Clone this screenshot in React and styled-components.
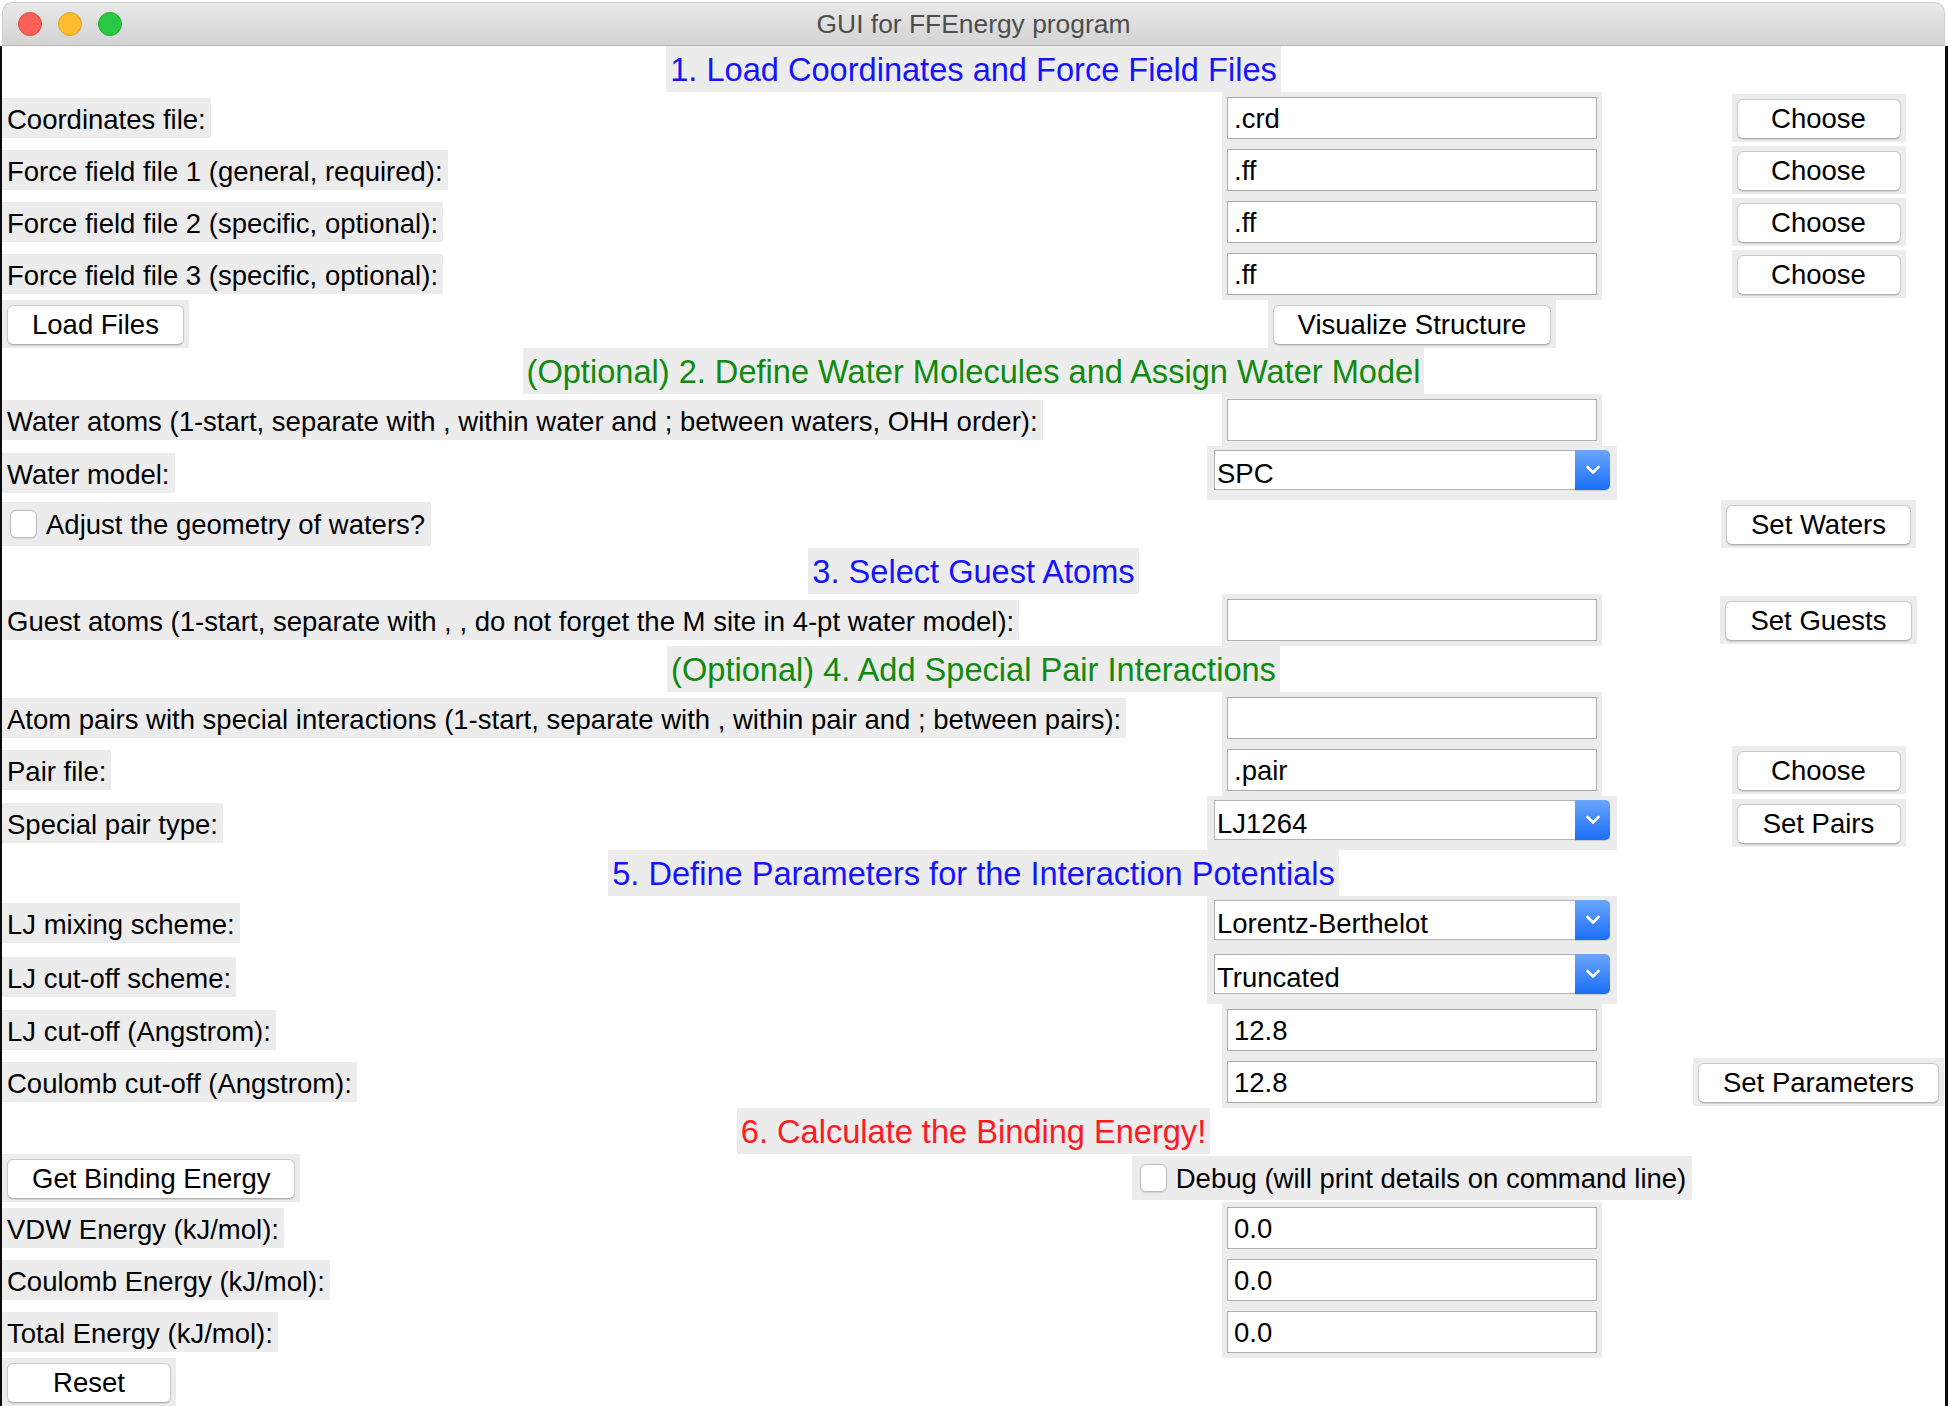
import React from 'react';
import styled, { createGlobalStyle } from 'styled-components';

const GlobalStyle = createGlobalStyle`
    * { box-sizing: border-box; }
    html, body {
        margin: 0;
        padding: 0;
        background: #fff;
        overflow: hidden;
    }
    body {
        font-family: "Liberation Sans", Arial, sans-serif;
    }
`;

export default function App () {
    return (
        <>
            <GlobalStyle />
            <Window>
                <TitleBar>
                    <Lights>
                        <Light color="#fe5f57" edge="#e2463f" />
                        <Light color="#febc2e" edge="#e0a326" />
                        <Light color="#28c840" edge="#1dad2b" />
                    </Lights>
                    <Title>GUI for FFEnergy program</Title>
                </TitleBar>

                <Form>
                    <Heading color="#1414ff">1. Load Coordinates and Force Field Files</Heading>
                    <FileRow label="Coordinates file:" value=".crd" />
                    <FileRow label="Force field file 1 (general, required):" value=".ff" />
                    <FileRow label="Force field file 2 (specific, optional):" value=".ff" />
                    <FileRow label="Force field file 3 (specific, optional):" value=".ff" />
                    <ButtonCell col={1} align="start"><Button>Load Files</Button></ButtonCell>
                    <ButtonCell col={2} align="center"><Button>Visualize Structure</Button></ButtonCell>

                    <Heading color="#108a10">(Optional) 2. Define Water Molecules and Assign Water Model</Heading>
                    <FieldLabel>Water atoms (1-start, separate with , within water and ; between waters, OHH order):</FieldLabel>
                    <Entry value="" />
                    <FieldLabel>Water model:</FieldLabel>
                    <Combo value="SPC" />
                    <CheckCell col={1} align="start">
                        <CheckBox />
                        <span>Adjust the geometry of waters?</span>
                    </CheckCell>
                    <ButtonCell col={3} align="center"><Button>Set Waters</Button></ButtonCell>

                    <Heading color="#1414ff">3. Select Guest Atoms</Heading>
                    <FieldLabel>Guest atoms (1-start, separate with , , do not forget the M site in 4-pt water model):</FieldLabel>
                    <Entry value="" />
                    <ButtonCell col={3} align="center"><Button>Set Guests</Button></ButtonCell>

                    <Heading color="#108a10">(Optional) 4. Add Special Pair Interactions</Heading>
                    <FieldLabel>Atom pairs with special interactions (1-start, separate with , within pair and ; between pairs):</FieldLabel>
                    <Entry value="" />
                    <FileRow label="Pair file:" value=".pair" />
                    <FieldLabel>Special pair type:</FieldLabel>
                    <Combo value="LJ1264" />
                    <ButtonCell col={3} align="center"><Button>Set Pairs</Button></ButtonCell>

                    <Heading color="#1414ff">5. Define Parameters for the Interaction Potentials</Heading>
                    <FieldLabel>LJ mixing scheme:</FieldLabel>
                    <Combo value="Lorentz-Berthelot" />
                    <FieldLabel>LJ cut-off scheme:</FieldLabel>
                    <Combo value="Truncated" />
                    <FieldLabel>LJ cut-off (Angstrom):</FieldLabel>
                    <Entry value="12.8" />
                    <FieldLabel>Coulomb cut-off (Angstrom):</FieldLabel>
                    <Entry value="12.8" />
                    <ButtonCell col={3} align="center"><Button>Set Parameters</Button></ButtonCell>

                    <Heading color="#ff1a1f">6. Calculate the Binding Energy!</Heading>
                    <ButtonCell col={1} align="start"><Button>Get Binding Energy</Button></ButtonCell>
                    <CheckCell col={2} align="center">
                        <CheckBox />
                        <span>Debug (will print details on command line)</span>
                    </CheckCell>
                    <FieldLabel>VDW Energy (kJ/mol):</FieldLabel>
                    <Entry value="0.0" />
                    <FieldLabel>Coulomb Energy (kJ/mol):</FieldLabel>
                    <Entry value="0.0" />
                    <FieldLabel>Total Energy (kJ/mol):</FieldLabel>
                    <Entry value="0.0" />
                    <ButtonCell col={1} align="start"><Button>Reset</Button></ButtonCell>
                </Form>
            </Window>
        </>
    )
}

function FileRow ({label, value}) {
    return (
        <>
            <FieldLabel>{label}</FieldLabel>
            <Entry value={value} />
            <ButtonCell col={3} align="center"><Button>Choose</Button></ButtonCell>
        </>
    )
}

function Entry ({value}) {
    return (
        <EntryCell>
            <EntryInput type="text" defaultValue={value} />
        </EntryCell>
    )
}

function Combo ({value}) {
    return (
        <ComboCell>
            <ComboBox>
                <ComboValue>{value}</ComboValue>
                <ComboArrow>
                    <svg width="16" height="10" viewBox="0 0 16 10">
                        <polyline points="2.5,2 8,7.5 13.5,2" fill="none" stroke="#fff" strokeWidth="2.6" strokeLinecap="round" strokeLinejoin="round" />
                    </svg>
                </ComboArrow>
            </ComboBox>
        </ComboCell>
    )
}


const Window = styled.div`
    width: 1948px;
    height: 1406px;
    display: flex;
    flex-direction: column;
    background: #fff;
`

const TitleBar = styled.div`
    height: 44px;
    margin: 2px 3px 0 2px;
    display: grid;
    grid-template-columns: 1fr auto 1fr;
    align-items: center;
    background: linear-gradient(#e9e9e9, #d3d3d3);
    border: 1px solid #cdcdcd;
    border-bottom-color: #b3b3b3;
    border-radius: 10px 10px 0 0;
`

const Lights = styled.div`
    display: flex;
    gap: 16px;
    padding-left: 15px;
`

const Light = styled.span`
    width: 24px;
    height: 24px;
    border-radius: 50%;
    background: ${props => props.color};
    border: 1px solid ${props => props.edge};
`

const Title = styled.div`
    font-size: 26.4px;
    color: #4d4d4d;
`

const Form = styled.div`
    flex: 1;
    display: grid;
    grid-template-columns: 1130px 560px 253px;
    align-items: center;
    align-content: start;
    border-left: 2px solid #0c0c0c;
    border-right: 3px solid #0c0c0c;
    background: #fff;
    font-size: 27.5px;
    color: #000;
`

const Heading = styled.div`
    grid-column: 1 / -1;
    justify-self: center;
    height: 46px;
    display: flex;
    align-items: center;
    padding: 1px 4px 0;
    background: #ececec;
    font-size: 32.6px;
    color: ${props => props.color};
    white-space: nowrap;
`

const FieldLabel = styled.div`
    grid-column: 1;
    justify-self: start;
    height: 40px;
    display: flex;
    align-items: center;
    padding: 3px 5px 0;
    background: #ececec;
    white-space: nowrap;
`

const EntryCell = styled.div`
    grid-column: 2;
    justify-self: center;
    padding: 5px;
    background: #ececec;
`

const EntryInput = styled.input`
    display: block;
    width: 370px;
    height: 42px;
    margin: 0;
    padding: 2px 6px 0;
    border: 1px solid #adadad;
    border-radius: 0;
    background: #fff;
    font-family: "Liberation Sans", Arial, sans-serif;
    font-size: 27.5px;
    color: #000;
    outline: none;
`

const ComboCell = styled.div`
    grid-column: 2;
    justify-self: center;
    padding: 4px 7px 10px;
    background: #ececec;
`

const ComboBox = styled.div`
    width: 396px;
    height: 40px;
    display: flex;
`

const ComboValue = styled.div`
    flex: 1;
    display: flex;
    align-items: center;
    padding: 8px 2px 0;
    background: #fff;
    border: 1px solid #b3b3b3;
    border-right: none;
    white-space: nowrap;
`

const ComboArrow = styled.div`
    width: 35px;
    display: flex;
    align-items: center;
    justify-content: center;
    background: linear-gradient(#6aa6fb, #1a6ef8);
    border-radius: 0 5px 5px 0;
    box-shadow: 0 1px 1px rgba(0, 0, 0, 0.15);
`

const ButtonCell = styled.div`
    grid-column: ${props => props.col};
    justify-self: ${props => props.align};
    padding: 5px 5px 3px;
    background: #ececec;
`

const Button = styled.button`
    display: block;
    height: 40px;
    min-width: 164px;
    padding: 0 24px;
    background: #fff;
    border: 1px solid #cacaca;
    border-bottom-color: #b0b0b0;
    border-radius: 6px;
    box-shadow: 0 1px 1px rgba(0, 0, 0, 0.12);
    font-family: "Liberation Sans", Arial, sans-serif;
    font-size: 27.5px;
    color: #000;
    white-space: nowrap;
`

const CheckCell = styled.label`
    grid-column: ${props => props.col};
    justify-self: ${props => props.align};
    height: 44px;
    display: flex;
    align-items: center;
    gap: 9px;
    padding: 2px 6px 0 8px;
    background: #ececec;
    white-space: nowrap;
`

const CheckBox = styled.span`
    width: 27px;
    height: 28px;
    margin-top: -2px;
    background: #fff;
    border: 1px solid #bcbcbc;
    border-radius: 6px;
    box-shadow: 0 1px 1px rgba(0, 0, 0, 0.1);
`
